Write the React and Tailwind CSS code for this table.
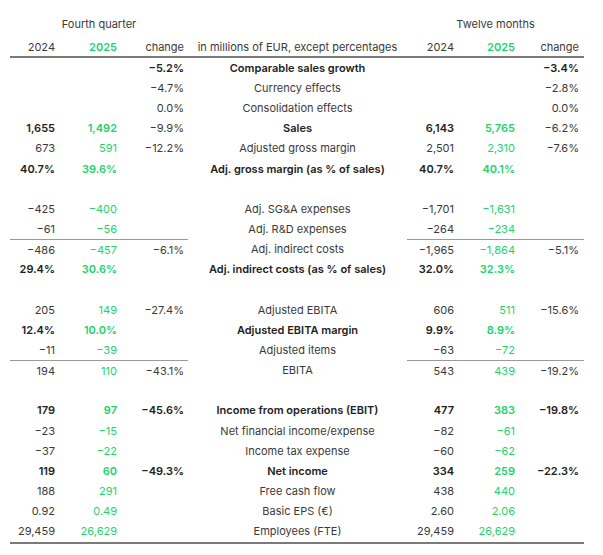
const G = 'text-[#22d36c]';

const rows = [
  { c: ['', '', '−5.2%', 'Comparable sales growth', '', '', '−3.4%'], b: 'all' },
  { c: ['', '', '−4.7%', 'Currency effects', '', '', '−2.8%'] },
  { c: ['', '', '0.0%', 'Consolidation effects', '', '', '0.0%'] },
  { c: ['1,655', '1,492', '−9.9%', 'Sales', '6,143', '5,765', '−6.2%'], b: 'nochange' },
  { c: ['673', '591', '−12.2%', 'Adjusted gross margin', '2,501', '2,310', '−7.6%'] },
  { c: ['40.7%', '39.6%', '', 'Adj. gross margin (as % of sales)', '40.7%', '40.1%', ''], b: 'all' },
  { c: ['', '', '', '', '', '', ''] },
  { c: ['−425', '−400', '', 'Adj. SG&A expenses', '−1,701', '−1,631', ''] },
  { c: ['−61', '−56', '', 'Adj. R&D expenses', '−264', '−234', ''] },
  { c: ['−486', '−457', '−6.1%', 'Adj. indirect costs', '−1,965', '−1,864', '−5.1%'], line: true },
  { c: ['29.4%', '30.6%', '', 'Adj. indirect costs (as % of sales)', '32.0%', '32.3%', ''], b: 'all' },
  { c: ['', '', '', '', '', '', ''] },
  { c: ['205', '149', '−27.4%', 'Adjusted EBITA', '606', '511', '−15.6%'] },
  { c: ['12.4%', '10.0%', '', 'Adjusted EBITA margin', '9.9%', '8.9%', ''], b: 'all' },
  { c: ['−11', '−39', '', 'Adjusted items', '−63', '−72', ''] },
  { c: ['194', '110', '−43.1%', 'EBITA', '543', '439', '−19.2%'], line: true },
  { c: ['', '', '', '', '', '', ''] },
  { c: ['179', '97', '−45.6%', 'Income from operations (EBIT)', '477', '383', '−19.8%'], b: 'all' },
  { c: ['−23', '−15', '', 'Net financial income/expense', '−82', '−61', ''] },
  { c: ['−37', '−22', '', 'Income tax expense', '−60', '−62', ''] },
  { c: ['119', '60', '−49.3%', 'Net income', '334', '259', '−22.3%'], b: 'all' },
  { c: ['188', '291', '', 'Free cash flow', '438', '440', ''] },
  { c: ['0.92', '0.49', '', 'Basic EPS (€)', '2.60', '2.06', ''] },
  { c: ['29,459', '26,629', '', 'Employees (FTE)', '29,459', '26,629', ''] },
];

const pad = ['pr-[5px]', 'pr-[5px]', 'pr-[4px]', '', 'pr-[4px]', 'pr-[4px]', 'pr-[5px]'];

function Cell({ i, text, bold, line }) {
  const green = i === 1 || i === 5;
  const center = i === 3;
  const color = green ? G : bold ? 'text-[#222]' : '';
  return (
    <div
      className={`flex h-full items-center ${center ? 'justify-center' : 'justify-end'} ${pad[i]} ${
        line && !center ? 'border-t border-[#9a9a9a]' : ''
      } ${color} ${bold ? 'font-semibold' : ''}`}
    >
      {text}
    </div>
  );
}

export default function App() {
  return (
    <div
      className="bg-white pt-[14px] pl-[10px] text-[11px] text-[#3a3a3a]"
      style={{ fontFamily: 'Inter, "Liberation Sans", sans-serif' }}
    >
      <div className="w-[574px]">
        <div className="grid h-[20px] grid-cols-[178px_219px_177px] items-center">
          <div className="text-center">Fourth quarter</div>
          <div />
          <div className="text-center">Twelve months</div>
        </div>
        <div className="grid h-[24px] grid-cols-[50px_62px_66px_219px_51px_61px_65px] border-b-2 border-[#7a7a7a] pt-[5px]">
          {['2024', '2025', 'change', 'in millions of EUR, except percentages', '2024', '2025', 'change'].map(
            (t, i) => (
              <Cell key={i} i={i} text={t} bold={i === 1 || i === 5} />
            )
          )}
        </div>
        {rows.map((r, ri) => (
          <div key={ri} className="grid h-[20.17px] grid-cols-[50px_62px_66px_219px_51px_61px_65px]">
            {r.c.map((t, i) => (
              <Cell
                key={i}
                i={i}
                text={t}
                line={r.line}
                bold={r.b === 'all' || (r.b === 'nochange' && i !== 2 && i !== 6)}
              />
            ))}
          </div>
        ))}
        <div className="border-t-2 border-[#7a7a7a]" />
      </div>
    </div>
  );
}
